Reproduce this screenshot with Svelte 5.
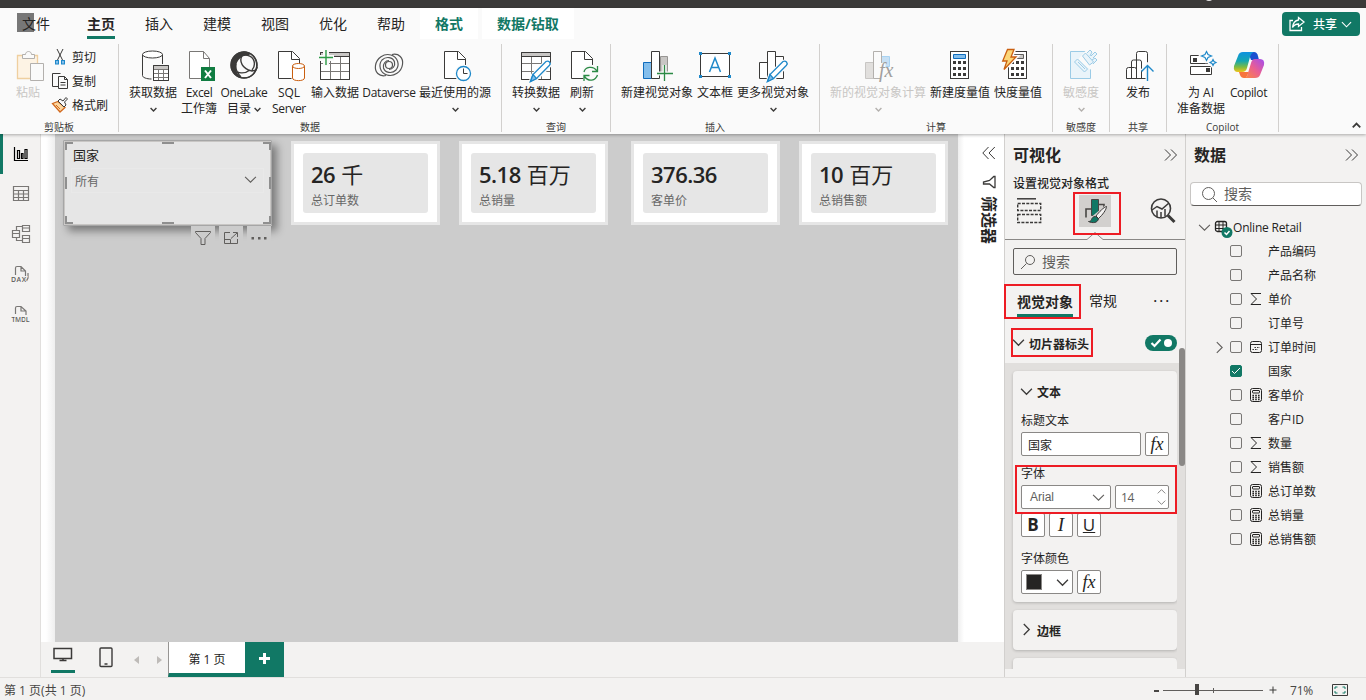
<script lang="ts">
	interface Command {
		icon: string;
		lines: string[];
		width: number;
		arrow?: 'below' | 'inline';
		disabled?: boolean;
	}

	interface Group {
		name: string;
		width: number;
		commands: Command[];
	}

	interface Field {
		name: string;
		kind?: 'sum' | 'calc' | 'date';
		checked?: boolean;
		expandable?: boolean;
	}

	const tabs = ['主页', '插入', '建模', '视图', '优化', '帮助'];
	const contextTabs = ['格式', '数据/钻取'];

	const groups: Group[] = [
		{
			name: '数据',
			width: 383,
			commands: [
				{ icon: 'getdata', lines: ['获取数据'], width: 52, arrow: 'below' },
				{ icon: 'excel', lines: ['Excel', '工作簿'], width: 40 },
				{ icon: 'onelake', lines: ['OneLake', '目录'], width: 50, arrow: 'inline' },
				{ icon: 'sql', lines: ['SQL', 'Server'], width: 40 },
				{ icon: 'enter', lines: ['输入数据'], width: 52 },
				{ icon: 'dataverse', lines: ['Dataverse'], width: 56 },
				{ icon: 'recent', lines: ['最近使用的源'], width: 76, arrow: 'below' }
			]
		},
		{
			name: '查询',
			width: 109,
			commands: [
				{ icon: 'transform', lines: ['转换数据'], width: 52, arrow: 'below' },
				{ icon: 'refresh', lines: ['刷新'], width: 40, arrow: 'below' }
			]
		},
		{
			name: '插入',
			width: 209,
			commands: [
				{ icon: 'newvisual', lines: ['新建视觉对象'], width: 76 },
				{ icon: 'textbox', lines: ['文本框'], width: 40 },
				{ icon: 'morevisual', lines: ['更多视觉对象'], width: 76, arrow: 'below' }
			]
		},
		{
			name: '计算',
			width: 233,
			commands: [
				{ icon: 'visualcalc', lines: ['新的视觉对象计算'], width: 100, arrow: 'below', disabled: true },
				{ icon: 'measure', lines: ['新建度量值'], width: 64 },
				{ icon: 'quick', lines: ['快度量值'], width: 52 }
			]
		},
		{
			name: '敏感度',
			width: 57,
			commands: [
				{ icon: 'sensitivity', lines: ['敏感度'], width: 40, arrow: 'below', disabled: true }
			]
		},
		{ name: '共享', width: 57, commands: [{ icon: 'publish', lines: ['发布'], width: 40 }] },
		{
			name: 'Copilot',
			width: 112,
			commands: [
				{ icon: 'ai', lines: ['为 AI', '准备数据'], width: 52 },
				{ icon: 'copilot', lines: ['Copilot'], width: 43 }
			]
		}
	];

	// left is relative to the report page
	const cards = [
		{ left: 236, value: '26', unit: '千', label: '总订单数' },
		{ left: 404, value: '5.18', unit: '百万', label: '总销量' },
		{ left: 576, value: '376.36', unit: '', label: '客单价' },
		{ left: 744, value: '10', unit: '百万', label: '总销售额' }
	];

	let fields = $state<Field[]>([
		{ name: '产品编码' },
		{ name: '产品名称' },
		{ name: '单价', kind: 'sum' },
		{ name: '订单号' },
		{ name: '订单时间', kind: 'date', expandable: true },
		{ name: '国家', checked: true },
		{ name: '客单价', kind: 'calc' },
		{ name: '客户ID' },
		{ name: '数量', kind: 'sum' },
		{ name: '销售额', kind: 'sum' },
		{ name: '总订单数', kind: 'calc' },
		{ name: '总销量', kind: 'calc' },
		{ name: '总销售额', kind: 'calc' }
	]);

	let activeTab = $state('主页');
	let titleText = $state('国家');

	// Latin labels are set a little tighter than the Chinese ones
	function isLatin(line: string): boolean {
		return /^[A-Za-z]{4,}$/.test(line);
	}
</script>

{#snippet chevron(dir: string, size: number)}
	<svg class="chev {dir}" width={size} height={size} viewBox="0 0 12 12"><path d="M1 3.5 6 8.5 11 3.5" /></svg>
{/snippet}

{#snippet grid()}
	<path class="w" d="M1.500 2.500h29v27h-29z" /><path class="grey" d="M2 3h28v3.500H2z" />
	<path class="thin" d="M2 13.500h28M2 21.500h28M11.500 7v22M21.500 7v22" /><path d="M1.500 2.500h29v27h-29zM2 6.500h28" />
{/snippet}

{#snippet pencil()}
	<g transform="translate(-1 0)">
		<path fill="#fff" stroke="#fafafa" stroke-width="4" d="m12 31 2-6L27 12l4 3-14 14z" />
		<path fill="#fff" stroke="#1e88c9" stroke-width="1.300" d="m11.500 31.500 2.500-7L27 11.500q2-1 3.500.5 1.300 1.600 0 3.200L17.500 28.500z" />
		<path fill="#83beec" stroke="#1e88c9" stroke-width="1.300" d="m11.500 31.500 2.500-7 3.500 4z" />
	</g>
{/snippet}

{#snippet keypad(x: number)}
	<rect class="w" x={x + 0.5} y="1.500" width="18" height="27" />
	{#each [11, 17, 23] as y (y)}
		{#each [3, 8, 13] as dx (dx)}
			<rect class="solid" x={x + dx} {y} width="3" height="3" />
		{/each}
	{/each}
{/snippet}

{#snippet ribbonIcon(name: string)}
	<svg class="big" width="32" height="32" viewBox="0 0 32 32">
		{#if name === 'getdata'}
			<path d="M5.500 4.500v21c0 2 4 3.500 9 3.500M25.500 4.500V14" />
			<ellipse class="w" cx="15.500" cy="4.500" rx="10" ry="3.500" />
			<path class="w" d="M16.500 15.500h15v15h-15z" /><path class="grey" d="M17 16h14v3H17z" />
			<path class="thin" d="M16.500 19.500h15M16.500 23.500h15M16.500 27.500h15M21.500 19v11M26.500 19v11" />
			<path d="M16.500 15.500h15v15h-15z" />
		{:else if name === 'excel'}
			<path class="w thin" d="M6.500 1.500h14l6 7v20h-20z" /><path class="thin" d="M20.500 1.500v7h6" />
			<path fill="#107c41" stroke="none" d="M18 17h14v14H18z" /><path stroke="#fff" stroke-width="2" d="m22 20.500 6 7.500M28 20.500l-6 7.500" />
		{:else if name === 'onelake'}
			<circle cx="16" cy="15" r="13.500" fill="#3b3a39" stroke="none" />
			<path fill="#fafafa" stroke="none" d="M22 4c6 4 8 12 4 18-3 5-9 6-13 5-3-2-5-5-5-9 0-8 6-13 14-14z" />
			<circle cx="16" cy="15" r="13" stroke-width="1.400" />
			<path fill="#3b3a39" stroke="none" d="M11 7c1-7 9-7 11-2-4 0-8 1-11 2z" />
			<path stroke-width="1.400" d="M10 8c6-5 14-3 16 3 1 4 0 7-2 9M14 6c-3 5 0 13 10 15 3 0 5-2 5-4M7 19c2 5 10 5 15 1M8 14c-1 5 1 9 5 13" />
		{:else if name === 'sql' || name === 'recent' || name === 'refresh'}
			<path class="w" d="M5.500 1.500h14l7 7v20h-21z" /><path d="M18.500 1.500v8h8" />
			{#if name === 'sql'}
				<path fill="#fff" stroke="#fafafa" stroke-width="3" d="M20 15h12v16H20z" />
				<path fill="#fff" stroke="#ca5f10" d="M19.500 16v12c0 3.500 12 3.500 12 0V16" /><ellipse fill="#fff" stroke="#ca5f10" cx="25.500" cy="16" rx="6" ry="2.500" />
			{:else if name === 'recent'}
				<circle fill="#fff" stroke="#fafafa" stroke-width="4" cx="24.500" cy="23.500" r="7" /><circle fill="#fff" stroke="#1e88c9" stroke-width="1.300" cx="24.500" cy="23.500" r="7" /><path d="M24.500 18.500v5h4" />
			{:else}
				<circle fill="#fafafa" stroke="none" cx="24.500" cy="23.500" r="9" />
				<path stroke="#2b8a45" stroke-width="1.300" d="M18 22c1-5 9-7 13-1M31.500 16v5.500H26M31.500 25c-2 6-9 7-13 1.500M18 31v-5.500h5.500" />
			{/if}
		{:else if name === 'enter'}
			{@render grid()}
			<path stroke="#fafafa" stroke-width="6" d="M7 0v16M0 8h15" /><path stroke="#2b9a45" stroke-width="1.400" d="M7 0v15M0 7.500h14" />
		{:else if name === 'dataverse'}
			{#each [0, 180] as turn (turn)}
				<path stroke="#555" stroke-width="1.200" transform="rotate({turn} 16 15)" d="M13 25.500C6 27 1.500 22 2.500 15.500 3.500 8 11 3 18 5c7 2 9 10 5 15-4 4-11 3-12.500-2-1-4 2-7.500 5.500-7.500" />
			{/each}
			<circle cx="16" cy="15" r="3.500" stroke="#555" stroke-width="1.200" />
		{:else if name === 'transform'}
			{@render grid()}
			{@render pencil()}
		{:else if name === 'newvisual'}
			<path fill="#83beec" stroke="#0f6cbd" d="M2.500 12.500h8v16h-8z" /><path fill="#c8c6c4" stroke="#979593" d="M19.500 6.500h7v16h-7z" /><path class="w" d="M10.500 1.500h8v27h-8z" />
			<path stroke="#fafafa" stroke-width="4" d="M23.500 15v16M16 23.500h16" /><path stroke="#2b8a45" stroke-width="1.300" d="M23.500 15v16M16 23.500h16" />
		{:else if name === 'textbox'}
			<path class="w" d="M1.500 3.500h29v23h-29z" /><path stroke="#1e88c9" stroke-width="1.500" d="m10.500 22 5.500-14 5.500 14M12 17.500h8" />
			<path fill="#1e88c9" stroke="none" d="M0 2h3v3H0zM29 2h3v3h-3zM0 25h3v3H0zM29 25h3v3h-3z" />
		{:else if name === 'morevisual'}
			<path class="w" d="M2.500 12.500h8v16h-8zM18.500 6.500h8v22h-8zM10.500 1.500h8v27h-8z" />
			{@render pencil()}
		{:else if name === 'visualcalc'}
			<path fill="#e1dfdd" stroke="#c8c6c4" d="M3.500 12.500h8v16h-8z" /><path fill="#c7e0f4" stroke="#a9d3f2" d="M19.500 6.500h8v10h-8z" /><path fill="#fafafa" stroke="#b3b0ad" d="M11.500 1.500h8v27h-8z" />
			<path stroke="#fafafa" stroke-width="5" d="M21 13v17" /><text x="17" y="27" class="fx" font-size="20" fill="#a19f9d">fx</text>
		{:else if name === 'measure'}
			{@render keypad(6)}
			<path fill="#83beec" stroke="#0f6cbd" d="M9.500 4.500h12v4h-12z" />
		{:else if name === 'quick'}
			{@render keypad(6)}
			<path class="grey" d="M9.500 4.500h12v4h-12z" /><path stroke="#605e5c" d="M9.500 4.500h12v4h-12z" />
			<path fill="#fcd779" stroke="#fafafa" stroke-width="4" d="M5 0h7L9 7h5L1 20l4-9H0z" /><path fill="#fcd779" stroke="#ca5f10" stroke-width="1.300" d="M5.500-.5h6.500l-3 7.500h5L2 19.500 5 11H.7z" />
		{:else if name === 'sensitivity'}
			<g stroke="#9bcbe6" fill="#eaf4fa"><path d="M5.500 1.500h20v27h-20z" /><path stroke="#fafafa" stroke-width="4" d="m16 9 8-9 9 9-8 8z" /><path d="m9.500 12 3-3 10 10-3 3zM13 12l7 7M17.500 6l7 9 4-3-8-9zM22 3l3-3 2 2-2 4M26 6l4-4 2 2-4 4M27 10l3-2 2 2-4 4" /></g>
		{:else if name === 'publish'}
			<path class="w" d="M14.500 28.500v-25q0-2 2-2h7q2 0 2 2v25zM9.500 28.500V12q0-2 2-2h6q2 0 2 2v16.500M4.500 28.500v-9q0-2 2-2h6q2 0 2 2v9z" /><path d="M4.500 28.500h18" />
			<path stroke="#fafafa" stroke-width="4" d="M25.500 16v15M20 21l5.500-6 6 6" /><path stroke="#1e88c9" stroke-width="1.400" d="M25.500 31V16M19.500 21.500l6-6 6 6" />
		{:else if name === 'ai'}
			<path class="w" d="M5.500 5.500h21v8h-21zM5.500 16.500h21v8h-21z" /><path class="solid" d="M8 8h4v4H8zM21 18h4v4h-4z" />
			<path fill="#fff" stroke="#fafafa" stroke-width="4" d="m21 1 5 5-5 5-5-5zM27 9l4 3-4 3-3-3z" /><path fill="#fff" stroke="#1e88c9" stroke-width="1.200" d="m21.500 1.500 1.500 3 3.500 1.500-3.500 1.500-1.500 3L20 7.500 16.500 6 20 4.500zM28 9.500l1 2 2 1-2 1-1 2-1-2-2-1 2-1z" />
		{:else}
			<defs>
				<linearGradient id="cpA" x1="0" y1="0" x2="0" y2="1"><stop offset="0" stop-color="#0f91e0" /><stop offset=".45" stop-color="#15a7b0" /><stop offset=".75" stop-color="#7dbb42" /><stop offset="1" stop-color="#f0c419" /></linearGradient>
				<linearGradient id="cpB" x1="1" y1="0" x2="0" y2="1"><stop offset="0" stop-color="#a24cf0" /><stop offset=".5" stop-color="#ea5f91" /><stop offset="1" stop-color="#fb8a3c" /></linearGradient>
			</defs>
			<path fill="#1a4fd0" stroke="none" d="M15 2h6q3 0 4 4l1 4h-8z" />
			<path fill="url(#cpA)" stroke="none" d="M10 2h11q-3 1-4 5l-3 11q-1 4-5 4H5q-5 0-4-6L5 6q1-4 5-4z" />
			<path fill="#f7743d" stroke="none" d="M6 22h10l-3 6h-2q-3 0-4-3z" />
			<path fill="url(#cpB)" stroke="none" d="M22 9h5q5 0 4 6l-4 10q-1 3-5 3H11q3 0 4-5l3-10q1-4 4-4z" />
		{/if}
	</svg>
{/snippet}

{#snippet fieldIcon(kind?: string)}
	<svg class="kind" width="14" height="14" viewBox="0 0 14 14">
		{#if kind === 'sum'}
			<path d="M12 1.500H2L7.500 7 2 12.500h10" />
		{:else if kind === 'calc'}
			<rect x="1.500" y=".5" width="11" height="13" rx="2" /><rect x="3.500" y="2.500" width="7" height="2.500" rx=".5" />
			<path stroke-width="1.600" stroke-dasharray="1.600 1.200" d="M3.400 7.500H11M3.400 9.500H11M3.400 11.500H11" />
		{:else if kind === 'date'}
			<rect x="1.500" y="1.500" width="11" height="11" rx="2" /><path d="M1.500 4.500h11" /><path stroke-dasharray="1.400 1.200" d="M5.500 7.500H11M3.500 9.500H9" />
		{/if}
	</svg>
{/snippet}

<div class="app">
	<div class="titlebar"><span class="avatar"></span></div>

	<header class="ribbon">
		<nav class="menu">
			<button class="tab file">文件</button>
			{#each tabs as tab (tab)}
				<button class="tab" class:active={tab === activeTab} onclick={() => (activeTab = tab)}>{tab}</button>
			{/each}
			{#each contextTabs as tab (tab)}
				<button class="tab context">{tab}</button>
			{/each}
			<button class="share">
				<svg width="16" height="16" viewBox="0 0 16 16"><path stroke-width="1.300" d="M4 4.500H1v10h11.500V11M9.500 1.500l5.500 4.500-5.500 4.500V8C7 8 5 9 3.500 11.500 4 7 6 4.500 9.500 4z" /></svg>
				<span>共享</span>
				{@render chevron('down', 11)}
			</button>
		</nav>

		<div class="groups">
			<section class="group clipboard">
				<div class="commands">
					<button class="command disabled paste">
						<svg class="big" width="32" height="32" viewBox="0 0 32 32">
							<path fill="#fdf3e4" stroke="#efcf9f" stroke-width="1.300" d="M5.500 5.500h20v23h-20z" /><path fill="#fafafa" stroke="#b3b0ad" d="M10.500 8.500v-4h3c0-4 6-4 6 0h3v4zM18.500 13.500h13v17h-13z" />
						</svg>
						<span>粘贴</span>
					</button>
					<div class="small-list">
						<button>
							<svg width="16" height="16" viewBox="0 0 16 16"><path d="m5 0 6 12M11 0 5 12" /><rect x="3.500" y="11.500" width="3" height="3.500" fill="#83beec" stroke="#1e88c9" /><rect x="9.500" y="11.500" width="3" height="3.500" fill="#83beec" stroke="#1e88c9" /></svg>
							<span>剪切</span>
						</button>
						<button>
							<svg width="16" height="16" viewBox="0 0 16 16"><path d="M6 13.500H.5V.5h8M6.500 3.500h6l3 3v9h-9zM12.500 3.500v3h3M8.500 9.500h5M8.500 12h5" /></svg>
							<span>复制</span>
						</button>
						<button>
							<svg width="16" height="16" viewBox="0 0 16 16"><path fill="#fcd7a0" stroke="#d2691e" stroke-width="1.300" d="m.5 6.500 5.500-2 7 6-5 4.500z" /><path stroke="#d2691e" d="m4 8 4 4" /><path fill="#fafafa" d="m6 4 2-2 3 2 3-3.500 1.500 1.500-3 3 1.500 3-2 2z" /></svg>
							<span>格式刷</span>
						</button>
					</div>
				</div>
				<div class="group-name">剪贴板</div>
			</section>
			{#each groups as group (group.name)}
				<section class="group" style:width="{group.width}px">
					<div class="commands">
						{#each group.commands as cmd (cmd.icon)}
							<button class="command" class:disabled={cmd.disabled} style:width="{cmd.width}px">
								{@render ribbonIcon(cmd.icon)}
								{#each cmd.lines as line, i (line)}
									<span class:latin={isLatin(line)}>{line}{#if cmd.arrow === 'inline' && i === cmd.lines.length - 1}&nbsp;{@render chevron('down bold', 7)}{/if}</span>
								{/each}
								{#if cmd.arrow === 'below'}
									<span class="below">{@render chevron('down bold', 7)}</span>
								{/if}
							</button>
						{/each}
					</div>
					<div class="group-name">{group.name}</div>
				</section>
			{/each}
			<button class="collapse" aria-label="折叠功能区">{@render chevron('up bold', 9)}</button>
		</div>
	</header>

	<div class="workspace">
		<aside class="views">
			<button class="view current" aria-label="报表视图">
				<svg width="16" height="16" viewBox="0 0 16 16"><path d="M1.500 1v13.500H15M4.500 4.500h2v8h-2zM8.500 7.500h1.500v5H8.500zM12 3.500h2v9h-2z" /></svg>
			</button>
			<button class="view" aria-label="表格视图">
				<svg width="18" height="18" viewBox="0 0 18 18"><path d="M1.500 1.500h15v14h-15zM1.500 5.500h15M1.500 9h15M1.500 12.500h15M6.500 5v10.500M11.500 5v10.500" /></svg>
			</button>
			<button class="view" aria-label="模型视图">
				<svg width="20" height="20" viewBox="0 0 20 20"><path d="M1.500 6.500h7v7h-7zM1.500 9.500h7M11.500 1.500h7v6h-7zM11.500 4h7M11.500 11.500h7v7h-7zM11.500 14.500h7M5.500 6.500v-4h6M5.500 13.500v3h6" /></svg>
			</button>
			<button class="view">
				<svg width="20" height="20" viewBox="0 0 20 20"><path d="M4.500 11V4q0-1.500 1.500-1.500h4l4.500 4.500V17M10 2.500v4.500h4.500M17 9v5l-1.500 3" /><text x="0" y="17.500" textLength="15">DAX</text></svg>
			</button>
			<button class="view">
				<svg width="20" height="20" viewBox="0 0 20 20"><path d="M4.500 10V4q0-1.500 1.500-1.500h4l5 4.500V11M10 2.500v4.500h5" /><text x="0.500" y="17.500" textLength="18">TMDL</text></svg>
			</button>
		</aside>

		<main class="stage">
			<div class="scroll">
				<div class="page">
					<div class="slicer">
						<div class="slicer-title">国家</div>
						<div class="slicer-select"><span>所有</span>{@render chevron('down thin', 13)}</div>
						<svg class="handles" width="210" height="87" viewBox="0 0 210 87">
							<path stroke="#a6a6a6" d="M.5.5h208v85H.5z" />
							<path stroke="#c8c6c4" d="M1.500 1.500h206v83H1.500z" />
							<path stroke="#8f8f8f" stroke-width="2" d="M3 10V3h7M200 3h7v7M3 76v7h7M200 83h7v-7M99 3h12M99 83h12M3 37v12M207 37v12" />
						</svg>
						<div class="visual-tools">
							<span><svg width="18" height="16" viewBox="0 0 18 16"><path d="M1.500 1.500h15v1L11 8.500v6H7v-6l-5.500-6z" /></svg></span>
							<span><svg width="16" height="14" viewBox="0 0 16 14"><path d="M7 1.500H1.500v11h13V8M10 1.500h4.500v4.500M14 2 8 7.500M1.500 8.500h6v4" /></svg></span>
							<span><svg width="16" height="14" viewBox="0 0 16 14"><path fill="#605e5c" stroke="none" d="M.5 6h2.500v2.500H.5zM7 6h2.500v2.500H7zM13 6h2.500v2.500H13z" /></svg></span>
						</div>
					</div>
					{#each cards as card (card.label)}
						<div class="card" style:left="{card.left}px">
							<div class="card-body">
								<div class="card-value"><b>{card.value}</b>{card.unit}</div>
								<div class="card-label">{card.label}</div>
							</div>
						</div>
					{/each}
				</div>
				<div class="filters">
					<svg width="14" height="14" viewBox="0 0 14 14"><path d="M6.500 1 .8 7l5.700 6M12.800 1 7 7l5.800 6" /></svg>
					<svg width="14" height="14" viewBox="0 0 14 14"><path stroke-width="1.300" d="M13 1.500v11h-1.200L7.500 9H1.500L1.500 7 7.500 5.500l4.300-4z" /></svg>
					<span>筛选器</span>
				</div>
			</div>
			<div class="page-tabs">
				<button class="layout desktop" aria-label="桌面布局">
					<svg width="20" height="16" viewBox="0 0 20 16"><path stroke-width="1.500" d="M1 1.500h17.500v10H1zM10 12v2M6.500 13.500h7" /></svg>
				</button>
				<button class="layout phone" aria-label="移动布局">
					<svg width="14" height="21" viewBox="0 0 14 21"><rect x="1" y="1" width="12" height="18.500" rx="1" stroke-width="1.400" /><path stroke-width="1.500" d="M5.500 17h3" /></svg>
				</button>
				<svg class="arrow" width="5" height="8" viewBox="0 0 5 8"><path d="M5 0v8L0 4z" /></svg>
				<svg class="arrow next" width="5" height="8" viewBox="0 0 5 8"><path d="M0 0v8l5-4z" /></svg>
				<button class="page-tab">第 1 页</button>
				<button class="add-page" aria-label="新建页"><svg width="11" height="11" viewBox="0 0 11 11"><path d="M5.500 0v11M0 5.500h11" /></svg></button>
			</div>
		</main>

		<aside class="pane visualizations">
			<div class="pane-title">
				<h2>可视化</h2>
				<svg width="14" height="14" viewBox="0 0 14 14"><path d="m1 1.500 5.500 5.500L1 12.500M7 1.500l5.500 5.500L7 12.500" /></svg>
			</div>
			<h3>设置视觉对象格式</h3>
			<div class="modes">
				<svg width="26" height="26" viewBox="0 0 26 26"><path d="M0 .8h19" stroke-width="1.500" /><path stroke-dasharray="3 1.300" d="M.7 5.500h23v7H.7zM.7 16.500h23v8H.7z" stroke-width="1.400" /></svg>
				<button class="mode marked" aria-label="设置格式">
					<svg width="24" height="28" viewBox="0 0 24 28"><path stroke="#484644" stroke-width="1.600" d="M3 20.500V12h5.500M15.500 7.500h5.500v3" /><path fill="#117865" stroke="#484644" d="M8.500 2.500h7v16h-7z" /><path fill="#f3f2f1" stroke="#d2d0ce" stroke-width="4" d="M24 9.500 15 21l-3-1.500z" /><path fill="#f3f2f1" d="M23.500 9.500c0 3-4 8.500-8 12l-2.500-2.500c3-4 8-9 10.500-9.500z" /><path fill="#117865" d="M12.500 19.500c-2.500 0-3.500 1.500-4 3s-1.500 2-3 2c4 2 9.500 1.500 10-3z" /></svg>
				</button>
				<svg width="26" height="26" viewBox="0 0 26 26"><circle cx="11" cy="10.500" r="9.500" stroke-width="1.600" /><path stroke-width="1.500" d="m2 12 5-3.500 5 2.500 7-6M7 12.500V19M11 14v6M15 11v7.500" /><path stroke-width="3" d="m18 17.500 6.500 6.500" /></svg>
			</div>
			<svg class="notch" width="180" height="9" viewBox="0 0 180 9"><path stroke="#8a8886" d="M0 7.500h82l8-7 8 7h82" /></svg>
			<div class="search">
				<svg width="16" height="16" viewBox="0 0 16 16"><circle cx="10" cy="6" r="4.500" /><path d="M6.500 9.500 1 15" /></svg>
				<span>搜索</span>
			</div>
			<div class="format-tabs">
				<button class="format-tab selected marked">视觉对象</button>
				<button class="format-tab">常规</button>
				<span class="more">···</span>
			</div>
			<div class="section-head">
				<div class="section-name marked">{@render chevron('down', 13)}<span>切片器标头</span></div>
				<div class="toggle">
					<svg width="12" height="10" viewBox="0 0 12 10"><path d="m1.500 5 3 3 6-6.500" /></svg>
					<i></i>
				</div>
			</div>
			<div class="settings">
				<div class="settings-list">
					<div class="box">
						<div class="box-head">{@render chevron('down', 13)}<span>文本</span></div>
						<label for="title-text">标题文本</label>
						<div class="row">
							<input id="title-text" bind:value={titleText} />
							<button class="sq fxb">fx</button>
						</div>
						<div class="font-field marked">
							<div class="field-label">字体</div>
							<div class="row">
								<div class="select">Arial{@render chevron('down thin', 13)}</div>
								<div class="number">14<span>{@render chevron('up thin', 9)}{@render chevron('down thin', 9)}</span></div>
							</div>
						</div>
						<div class="row styles">
							<button class="sq b">B</button>
							<button class="sq i">I</button>
							<button class="sq u">U</button>
						</div>
						<div class="field-label color-label">字体颜色</div>
						<div class="row">
							<div class="color"><i></i>{@render chevron('down', 13)}</div>
							<button class="sq fxb">fx</button>
						</div>
					</div>
					<div class="box closed">{@render chevron('right', 13)}<span>边框</span></div>
					<div class="box closed"></div>
				</div>
				<div class="scrollbar"><i></i></div>
			</div>
		</aside>

		<aside class="pane data">
			<div class="pane-title">
				<h2>数据</h2>
				<svg width="14" height="14" viewBox="0 0 14 14"><path d="m1 1.500 5.500 5.500L1 12.500M7 1.500l5.500 5.500L7 12.500" /></svg>
			</div>
			<div class="search">
				<svg width="17" height="17" viewBox="0 0 17 17"><circle cx="7.500" cy="7.500" r="6" /><path d="m12 12 4 4" /></svg>
				<span>搜索</span>
			</div>
			<div class="table-row">
				{@render chevron('down thin', 13)}
				<svg class="table-icon" width="19" height="19" viewBox="0 0 19 19"><rect x="1.500" y="1.500" width="11" height="10" rx="2" stroke-width="1.300" /><path d="M1.500 5h11M1.500 8.500h11M5 1.500v10M9 1.500v10" /><circle cx="13" cy="12.500" r="5.500" fill="#117865" stroke="none" /><path stroke="#fff" stroke-width="1.500" d="m10.500 12.500 2 2 3-3.500" /></svg>
				<span>Online Retail</span>
			</div>
			{#each fields as field (field.name)}
				<div class="field">
					<span class="expander">{#if field.expandable}{@render chevron('right thin', 13)}{/if}</span>
					<button class="check" class:on={field.checked} aria-label={field.name} onclick={() => (field.checked = !field.checked)}>
						{#if field.checked}<svg width="10" height="10" viewBox="0 0 10 10"><path d="m1 5 2.500 2.500L9 2" /></svg>{/if}
					</button>
					{@render fieldIcon(field.kind)}
					<span class="field-name">{field.name}</span>
				</div>
			{/each}
		</aside>
	</div>

	<footer class="status">
		<span class="page-count">第 1 页(共 1 页)</span>
		<span class="minus"></span>
		<div class="zoom"><i></i></div>
		<svg class="plus" width="8" height="8" viewBox="0 0 8 8"><path d="M4 .5v7M.5 4h7" /></svg>
		<span class="percent">71%</span>
		<svg width="16" height="12" viewBox="0 0 16 12"><path d="M.5.5h15v11H.5z" /><path stroke="#117865" d="M3 5V3h2.500M10.500 3H13v2M13 7v2h-2.500M5.500 9H3V7" /></svg>
	</footer>
</div>

<style>
	:global(body) {
		margin: 0;
		overflow: hidden;
	}

	.app {
		width: 1366px;
		height: 700px;
		display: flex;
		flex-direction: column;
		overflow: hidden;
		background: #f3f2f1;
		color: #252423;
		font: 12px/16px 'Open Sans', 'Noto Sans CJK SC', sans-serif;
	}

	.app :global(*) {
		box-sizing: border-box;
	}

	button {
		margin: 0;
		padding: 0;
		border: 0;
		background: none;
		color: inherit;
		font: inherit;
		white-space: nowrap;
	}

	svg {
		display: block;
		flex: none;
		fill: none;
		stroke: #3b3a39;
		overflow: visible;
	}

	.chev {
		display: inline-block;
		stroke-width: 1.200;
	}

	.chev.bold {
		stroke-width: 2.400;
	}

	.chev.thin {
		stroke: #605e5c;
		stroke-width: 1;
	}

	.chev.up {
		transform: rotate(180deg);
	}

	.chev.right {
		transform: rotate(-90deg);
	}

	/* red frames of the tutorial overlay */
	.marked {
		position: relative;
	}

	.marked::before {
		content: '';
		position: absolute;
		z-index: 2;
		border: 2px solid #ed1c24;
		pointer-events: none;
	}

	.titlebar {
		height: 8px;
		flex: none;
		background: #3b3a39;
		display: flex;
		justify-content: flex-end;
		overflow: hidden;
	}

	.avatar {
		width: 8px;
		height: 8px;
		margin: -7px 153px 0 0;
		border-radius: 50%;
		background: #e8e8e8;
	}

	.ribbon {
		height: 126px;
		flex: none;
		background: #fafafa;
		position: relative;
		z-index: 1;
		box-shadow: 0 1px 3px rgba(0, 0, 0, 0.3);
	}

	.menu {
		height: 32px;
		display: flex;
		align-items: flex-start;
	}

	.tab {
		height: 31px;
		padding: 0 15px;
		font-size: 14px;
		line-height: 31px;
		position: relative;
	}

	.file {
		padding: 0;
		margin: 0 22px 0 22px;
		isolation: isolate;
	}

	.file::before {
		content: '';
		position: absolute;
		z-index: -1;
		left: -5px;
		top: 5px;
		width: 17px;
		height: 19px;
		background: #777;
	}

	.tab.active {
		font-weight: 700;
	}

	.tab.active::after {
		content: '';
		position: absolute;
		left: 15px;
		right: 15px;
		bottom: 0;
		height: 3px;
		background: #117865;
	}

	.context {
		margin-right: 4px;
		background: #fff;
		color: #117865;
		font-weight: 700;
	}

	.share {
		width: 78px;
		height: 24px;
		margin: 4px 6px 0 auto;
		display: flex;
		align-items: center;
		padding-left: 7px;
		border-radius: 4px;
		background: #117865;
		color: #fff;
	}

	.share span {
		margin: 1px 4px 0 8px;
		font-weight: 500;
	}

	.share svg {
		stroke: #fff;
	}

	.groups {
		height: 88px;
		margin-top: 4px;
		display: flex;
	}

	.group {
		border-right: 1px solid #d2d0ce;
		display: flex;
		flex-direction: column;
		justify-content: space-between;
	}

	.clipboard {
		width: 119px;
	}

	.commands {
		display: flex;
		padding-left: 8px;
	}

	.command {
		height: 73px;
		padding-top: 6px;
		display: flex;
		flex-direction: column;
		align-items: center;
		flex: none;
	}

	.command .big {
		margin-bottom: 3px;
	}

	.command span {
		height: 16px;
		line-height: 16px;
	}

	.latin {
		letter-spacing: -0.35px;
	}

	.paste {
		width: 40px;
	}

	.small-list {
		margin: 1px 0 0 4px;
		display: flex;
		flex-direction: column;
	}

	.small-list button {
		height: 24px;
		display: flex;
		align-items: center;
		gap: 4px;
	}

	.small-list span {
		padding-top: 1px;
	}

	.disabled {
		color: #c8c6c4;
	}

	.disabled .chev {
		stroke: #b3b0ad;
	}

	.group-name {
		height: 12px;
		margin-bottom: -1px;
		text-align: center;
		font-size: 10px;
		line-height: 12px;
		color: #3b3a39;
	}

	.collapse {
		align-self: flex-end;
		margin: 0 5px -2px auto;
	}

	.w {
		fill: #fff;
	}

	.thin {
		stroke: #797775;
	}

	.grey {
		fill: #c8c6c4;
		stroke: none;
	}

	.solid {
		fill: #3b3a39;
		stroke: none;
	}

	.fx {
		font-family: 'Liberation Serif', serif;
		font-style: italic;
		stroke: none;
	}

	.workspace {
		flex: 1;
		min-height: 0;
		display: flex;
	}

	.views {
		width: 41px;
		border-right: 1px solid #e1dfdd;
	}

	.view {
		width: 40px;
		height: 40px;
		padding-left: 2px;
		display: flex;
		align-items: center;
		justify-content: center;
	}

	.view svg {
		stroke: #797775;
		stroke-width: 1.200;
	}

	.view text {
		font: 600 7px 'Open Sans', sans-serif;
		fill: #605e5c;
		stroke: #f3f2f1;
		stroke-width: 2px;
		paint-order: stroke;
	}

	.view.current {
		border-left: 3px solid #117865;
		padding: 0 1px 0 0;
	}

	.view.current svg {
		stroke: #000;
	}

	.stage {
		width: 963px;
		display: flex;
		flex-direction: column;
	}

	.scroll {
		height: 508px;
		display: flex;
		padding-left: 14px;
		background: linear-gradient(90deg, #fff 5px, #eee 14px, #fff 15px);
	}

	.page {
		width: 903px;
		position: relative;
		background: #ccc;
	}

	.slicer {
		position: absolute;
		left: 8px;
		top: 6px;
		width: 209px;
		height: 86px;
		padding: 7px 8px;
		background: #e6e6e6;
		box-shadow: 5px 5px 8px rgba(0, 0, 0, 0.4);
	}

	.slicer-title {
		padding-left: 2px;
		font-size: 13px;
	}

	.slicer-select {
		height: 25px;
		margin-top: 5px;
		padding: 0 6px 0 3px;
		display: flex;
		align-items: center;
		justify-content: space-between;
		border: 1px solid #e9e9e9;
		color: #666;
	}

	.slicer-select span {
		padding-top: 3px;
	}

	.slicer-select .chev {
		margin: -2px 0 0;
		transform: none;
	}

	.handles {
		position: absolute;
		left: 0;
		top: 0;
	}

	.visual-tools {
		position: absolute;
		right: 1px;
		top: 86px;
		display: flex;
		gap: 4px;
	}

	.visual-tools span {
		width: 24px;
		height: 24px;
		display: flex;
		align-items: center;
		justify-content: center;
		background: #ccc;
	}

	.visual-tools svg {
		stroke: #605e5c;
	}

	.card {
		position: absolute;
		top: 7px;
		width: 149px;
		height: 84px;
		padding: 9px;
		border: 3px solid #e6e6e6;
		background: #fff;
	}

	.card-body {
		width: 125px;
		height: 60px;
		padding: 7px 8px;
		border-radius: 3px;
		background: #e6e6e6;
	}

	.card-value {
		font-size: 22px;
		line-height: 29px;
		white-space: nowrap;
	}

	.card-value b {
		margin-right: 6px;
		font-size: 22px;
		font-weight: 600;
		letter-spacing: -0.500px;
	}

	.card-label {
		padding-top: 2px;
		color: #666;
		line-height: 20px;
	}

	.filters {
		width: 46px;
		padding: 12px 0 0 15px;
		display: flex;
		flex-direction: column;
		align-items: center;
		background: linear-gradient(90deg, #eee, #fff 6px);
	}

	.filters svg:first-child {
		margin-bottom: 15px;
	}

	.filters span {
		margin-top: 7px;
		writing-mode: vertical-rl;
		text-orientation: sideways;
		font-size: 16px;
		font-weight: 700;
	}

	.page-tabs {
		flex: 1;
		display: flex;
		align-items: center;
	}

	.layout {
		height: 35px;
		display: flex;
		justify-content: center;
		padding-top: 5px;
	}

	.desktop {
		width: 24px;
		height: 31px;
		margin: -4px 0 0 10px;
		padding-right: 1px;
		border-bottom: 3px solid #117865;
	}

	.phone {
		margin: -1px 21px 0 24px;
	}

	.arrow {
		fill: #bebbb8;
		stroke: none;
	}

	.next {
		margin: 0 6px 0 18px;
	}

	.page-tab {
		width: 77px;
		height: 35px;
		padding-top: 5px;
		border-left: 1px solid #979593;
		border-bottom: 4px solid #117865;
		background: #fff;
	}

	.add-page {
		width: 39px;
		height: 35px;
		padding-bottom: 2px;
		display: flex;
		align-items: center;
		justify-content: center;
		background: #117865;
	}

	.add-page svg {
		stroke: #fff;
		stroke-width: 3;
	}

	.pane {
		width: 181px;
		border-left: 1px solid #d2d0ce;
		display: flex;
		flex-direction: column;
	}

	.pane-title {
		height: 41px;
		flex: none;
		padding: 0 7px 0 8px;
		display: flex;
		align-items: center;
		justify-content: space-between;
	}

	h2 {
		margin: 0;
		font-size: 16px;
		font-weight: 700;
	}

	h3 {
		height: 16px;
		margin: 1px 8px -1px;
		font-size: 12px;
		font-weight: 500;
	}

	.modes {
		height: 41px;
		padding: 4px 9px 0 12px;
		display: flex;
		align-items: flex-start;
	}

	.modes > svg {
		margin-top: 3px;
	}

	.mode {
		width: 32px;
		height: 32px;
		padding: 0 4px;
		margin: 0 39px 0 36px;
		background: #d2d0ce;
	}

	.mode::before {
		inset: -3px -10px -8px -6px;
	}

	.notch {
		margin-bottom: 7px;
	}

	.search {
		height: 27px;
		flex: none;
		display: flex;
		align-items: center;
		font-size: 14px;
		color: #605e5c;
	}

	.search svg {
		stroke: #605e5c;
	}

	.visualizations .search {
		margin: 0 8px;
		padding-left: 6px;
		gap: 6px;
		border: 1px solid #605e5c;
		border-radius: 2px;
	}

	.format-tabs {
		height: 44px;
		flex: none;
		margin-top: 9px;
		display: flex;
		align-items: flex-start;
	}

	.format-tab {
		height: 33px;
		font-size: 14px;
		line-height: 34px;
	}

	.format-tab.selected {
		margin: 0 16px 0 12px;
		border-bottom: 3px solid #117865;
		font-weight: 700;
		line-height: 35px;
	}

	.format-tab.selected::before {
		inset: 0 -8px -5px -13px;
	}

	.more {
		margin-left: auto;
		padding-right: 14px;
		font-size: 17px;
		line-height: 34px;
		letter-spacing: 1.500px;
	}

	.section-head {
		height: 35px;
		flex: none;
		padding: 0 8px 0 6px;
		display: flex;
		justify-content: space-between;
	}

	.section-name {
		width: 82px;
		height: 29px;
		display: flex;
		align-items: center;
		gap: 4px;
		padding: 0 0 0 1px;
		font-weight: 700;
	}

	.section-name span {
		padding-top: 4px;
	}

	.section-name::before {
		inset: 0;
	}

	.toggle {
		width: 32px;
		height: 16px;
		margin-top: 7px;
		padding: 0 5px;
		display: flex;
		align-items: center;
		justify-content: space-between;
		border-radius: 8px;
		background: #117865;
	}

	.toggle svg {
		stroke: #fff;
		stroke-width: 2.200;
	}

	.toggle i {
		width: 8px;
		height: 8px;
		border-radius: 50%;
		background: #fff;
	}

	.settings {
		height: 306px;
		flex: none;
		display: flex;
		background: #e1dfdd;
	}

	.settings-list {
		width: 172px;
		padding: 8px 0 0 8px;
		display: flex;
		flex-direction: column;
		gap: 8px;
		overflow: hidden;
	}

	.box {
		height: 231px;
		flex: none;
		padding: 13px 8px 0;
		border-radius: 4px;
		background: #f3f2f1;
		box-shadow: 0 1px 3px rgba(0, 0, 0, 0.2);
	}

	.box-head {
		height: 16px;
		display: flex;
		align-items: center;
		gap: 4px;
		font-weight: 700;
	}

	.box-head .chev,
	.box.closed .chev {
		margin: -2px 0 0 -1px;
	}

	.box-head span {
		padding-top: 2px;
	}

	.box label {
		display: block;
		height: 19px;
		margin-top: 13px;
	}

	.box.closed {
		height: 40px;
		padding-top: 0;
		display: flex;
		align-items: center;
		gap: 4px;
		font-weight: 700;
	}

	.box.closed span {
		padding-top: 3px;
	}

	.row {
		display: flex;
		gap: 4px;
	}

	.sq,
	input,
	.select,
	.number,
	.color {
		height: 24px;
		border: 1px solid #8a8886;
		border-radius: 2px;
		background: #fff;
	}

	.sq {
		width: 24px;
		text-align: center;
	}

	.fxb {
		font: italic 18px/19px 'Liberation Serif', serif;
	}

	input {
		width: 120px;
		padding: 2px 6px 0;
		color: inherit;
		font: inherit;
		outline: none;
	}

	.font-field {
		margin-top: 9px;
	}

	.font-field::before {
		inset: 0 -8px -5px -6px;
	}

	.field-label {
		height: 20px;
		padding-top: 1px;
	}

	.select,
	.number {
		display: flex;
		align-items: center;
		justify-content: space-between;
		color: #605e5c;
	}

	.select {
		width: 90px;
		padding: 0 5px 0 8px;
		font-family: 'Liberation Sans', sans-serif;
	}

	.number {
		width: 54px;
		padding: 2px 2px 0 5px;
		letter-spacing: -0.300px;
	}

	.number span {
		margin-top: -2px;
		display: flex;
		flex-direction: column;
		gap: 2px;
	}

	.styles {
		margin-top: 4px;
		font-size: 17px;
		line-height: 22px;
	}

	.b {
		font-weight: 700;
	}

	.i {
		font: italic 19px/20px 'Liberation Serif', serif;
	}

	.u {
		text-decoration: underline;
	}

	.color-label {
		margin-top: 13px;
	}

	.color {
		width: 52px;
		padding: 0 3px 0 4px;
		display: flex;
		align-items: center;
		justify-content: space-between;
	}

	.color i {
		width: 16px;
		height: 16px;
		border: 1px solid #8a8886;
		background: #252423;
	}

	.scrollbar {
		flex: 1;
		padding-left: 2px;
	}

	.scrollbar i {
		display: block;
		width: 6px;
		height: 118px;
		margin-top: -15px;
		border-radius: 3px;
		background: #8a8886;
	}

	.data {
		flex: none;
	}

	.data .search {
		height: 24px;
		margin: 7px 4px 9px 4px;
		padding-left: 10px;
		gap: 6px;
		border: 1px solid #c8c6c4;
		border-bottom-color: #605e5c;
		border-radius: 4px;
		background: #fff;
	}

	.table-row,
	.field {
		height: 24px;
		flex: none;
		display: flex;
		align-items: center;
	}

	.table-row {
		padding-left: 12px;
	}

	.table-icon {
		margin: 4px 0 0 3px;
		stroke: #252423;
	}

	.table-row span {
		padding-top: 1px;
		letter-spacing: -0.200px;
	}

	.expander {
		width: 16px;
		height: 13px;
		margin-left: 27px;
		display: flex;
	}

	.check {
		width: 12px;
		height: 12px;
		margin: 0 7px 0 1px;
		border: 1px solid #797775;
		border-radius: 2px;
	}

	.check.on {
		border-color: #117865;
		background: #117865;
	}

	.check svg {
		stroke: #fff;
	}

	.kind {
		stroke: #252423;
	}

	.field-name {
		padding-top: 2px;
		margin-left: 5px;
	}

	.status {
		height: 23px;
		flex: none;
		display: flex;
		align-items: center;
		border-top: 1px solid #e1dfdd;
		padding: 3px 18px 0 4px;
		color: #484644;
	}

	.minus {
		width: 5px;
		height: 2px;
		margin: 0 4px 0 auto;
		background: #484644;
	}

	.zoom {
		width: 100px;
		height: 12px;
		margin-top: -2px;
		display: flex;
		align-items: center;
		background: linear-gradient(#605e5c, #605e5c) 0 6px / 100% 1px no-repeat, linear-gradient(#605e5c, #605e5c) 50px 4px / 1px 5px no-repeat;
	}

	.zoom i {
		width: 4px;
		height: 11px;
		margin-left: 32px;
		background: #484644;
	}

	.plus {
		margin: -2px 13px 0 6px;
	}

	.status > svg:last-child {
		margin-top: -2px;
	}

	.percent {
		width: 42px;
		letter-spacing: -0.200px;
	}
</style>
